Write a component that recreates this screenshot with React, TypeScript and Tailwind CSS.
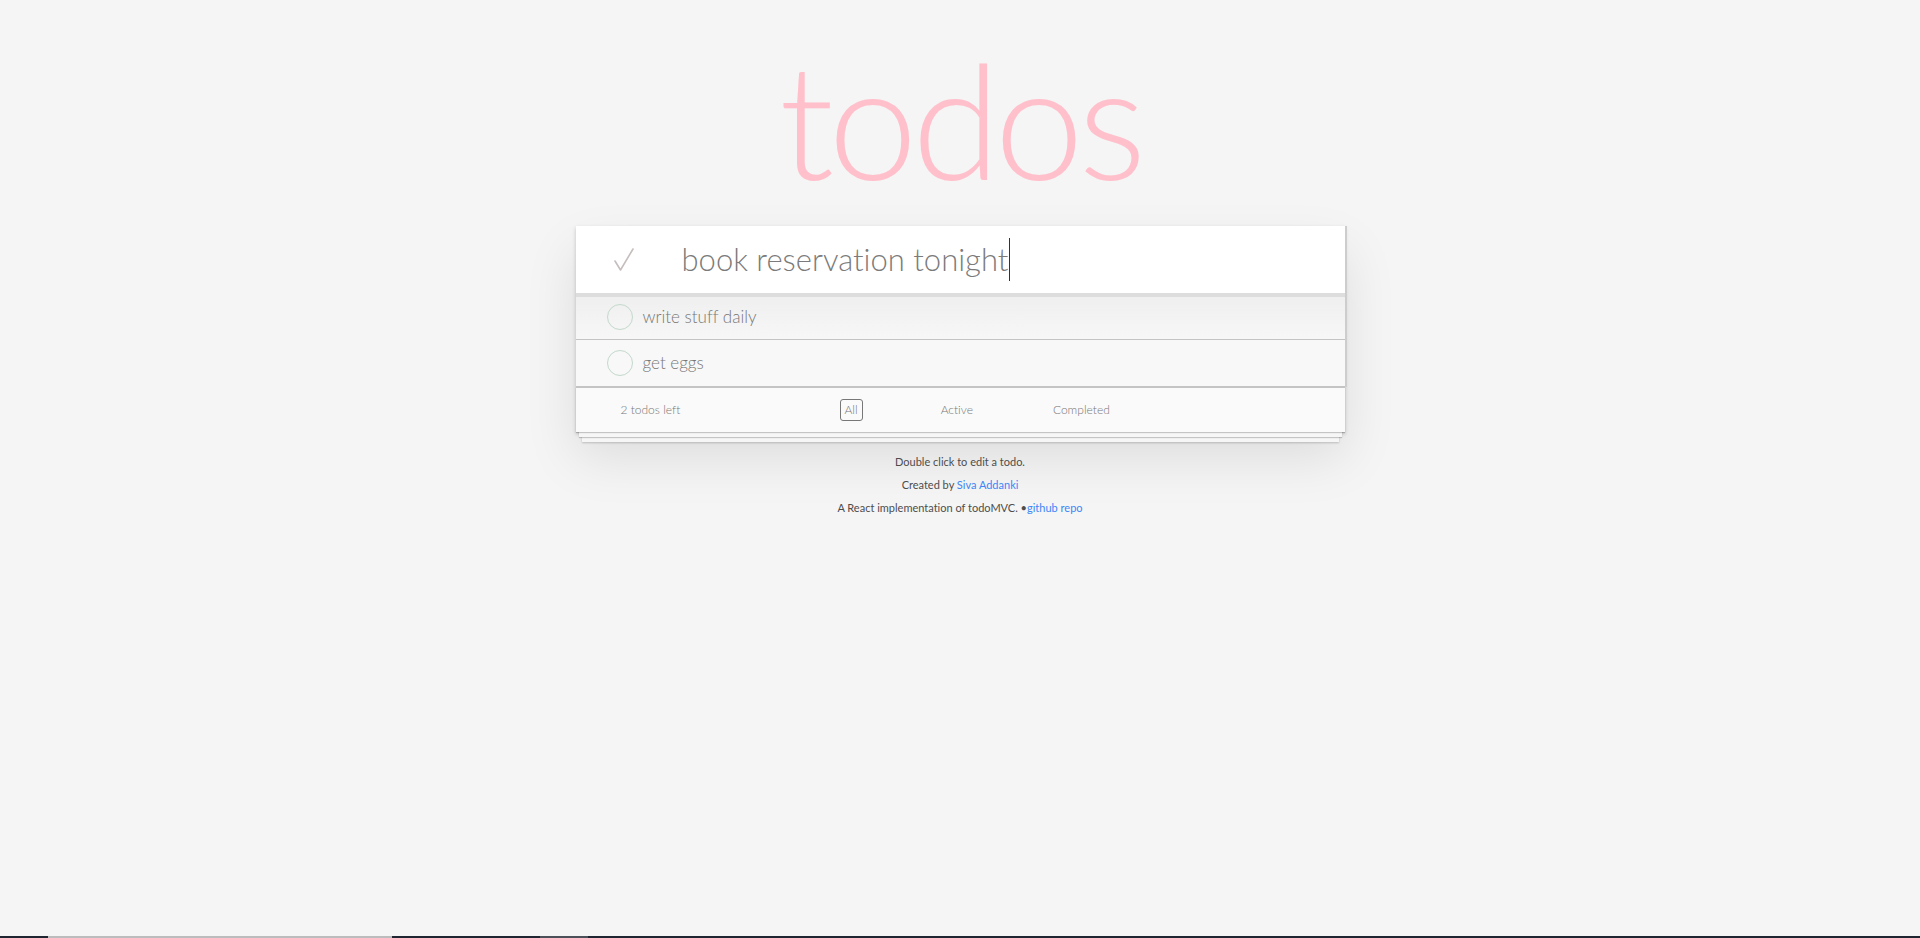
import React from "react";

const todos = [
  { id: 1, text: "write stuff daily" },
  { id: 2, text: "get eggs" },
];

function CheckIcon() {
  return (
    <svg width="24" height="28" viewBox="0 0 24 28" fill="none">
      <path
        d="M2 15 L7.5 24 L20 3"
        stroke="#c6bdbd"
        strokeWidth="1.6"
        strokeLinecap="round"
        strokeLinejoin="round"
      />
    </svg>
  );
}

function TodoItem({ text, first }: { text: string; first?: boolean }) {
  return (
    <li
      className={`flex items-center border-b border-[#c4c4c4] pl-[31px] ${
        first
          ? "h-[43px] pb-[3px] bg-gradient-to-b from-[#efefef] to-[#f7f7f7]"
          : "h-[47px] bg-[#f8f8f8]"
      }`}
    >
      <span className="h-[26px] w-[26px] rounded-full border border-[#c3d9cc]" />
      <span className="ml-[10px] text-[17px] font-light text-[#777]">{text}</span>
    </li>
  );
}

export default function App() {
  return (
    <div
      className="flex min-h-[938px] flex-col bg-[#f5f5f5] [font-variant-ligatures:none]"
      style={{ fontFamily: "Lato, 'Open Sans', sans-serif" }}
    >
      <div className="flex-1">
        <h1 className="h-[226px] pt-[38px] text-center text-[160px] leading-[160px] font-light tracking-[-0.035em] text-[#ffc0cb]">
          todos
        </h1>

        <section className="mx-auto w-[769px] bg-white shadow-[0_2px_4px_rgba(0,0,0,0.2),0_25px_50px_rgba(0,0,0,0.1)]">
          <div className="shadow-[2px_0_0_0_#cdcdcd]">
            <div className="flex h-[71px] items-center border-b-4 border-[#dddddd] bg-white pl-[37px]">
              <CheckIcon />
              <div className="ml-[45px] flex items-center text-[31px] font-light text-[#7b7b7b]">
                book reservation tonight
                <span className="ml-[1px] h-[43px] w-[1px] bg-[#333]" />
              </div>
            </div>
            <ul>
              {todos.map((t, i) => (
                <TodoItem key={t.id} text={t.text} first={i === 0} />
              ))}
            </ul>
          </div>

          <footer className="flex h-[45px] items-center border-t border-[#c4c4c4] bg-[#fafafa] pl-[45px] text-[12px] font-light text-[#777] shadow-[0_1px_1px_rgba(0,0,0,0.2),0_8px_0_-3px_#f6f6f6,0_9px_1px_-3px_rgba(0,0,0,0.2),0_16px_0_-6px_#f6f6f6,0_17px_2px_-6px_rgba(0,0,0,0.2)]">
            <span className="w-[219px]">2 todos left</span>
            <span className="rounded-[3px] border border-[#777] px-[4px] py-[3px] leading-[14px]">
              All
            </span>
            <span className="ml-[78px]">Active</span>
            <span className="ml-[80px]">Completed</span>
          </footer>
        </section>

        <div className="mt-[22px] flex flex-col items-center gap-[7px] text-[11px] leading-[16px] text-[#4d4d4d]">
          <p>Double click to edit a todo.</p>
          <p>
            Created by <a className="text-[#3b86f7]">Siva Addanki</a>
          </p>
          <p>
            A React implementation of todoMVC. •<a className="text-[#3b86f7]">github repo</a>
          </p>
        </div>
      </div>

      <div className="flex h-[2px]">
        <div className="w-[48px] bg-[#1f2531]" />
        <div className="w-[344px] bg-[#bcbcbc]" />
        <div className="w-[148px] bg-[#1f2531]" />
        <div className="w-[48px] bg-[#4b5059]" />
        <div className="flex-1 bg-[#1f2531]" />
      </div>
    </div>
  );
}
